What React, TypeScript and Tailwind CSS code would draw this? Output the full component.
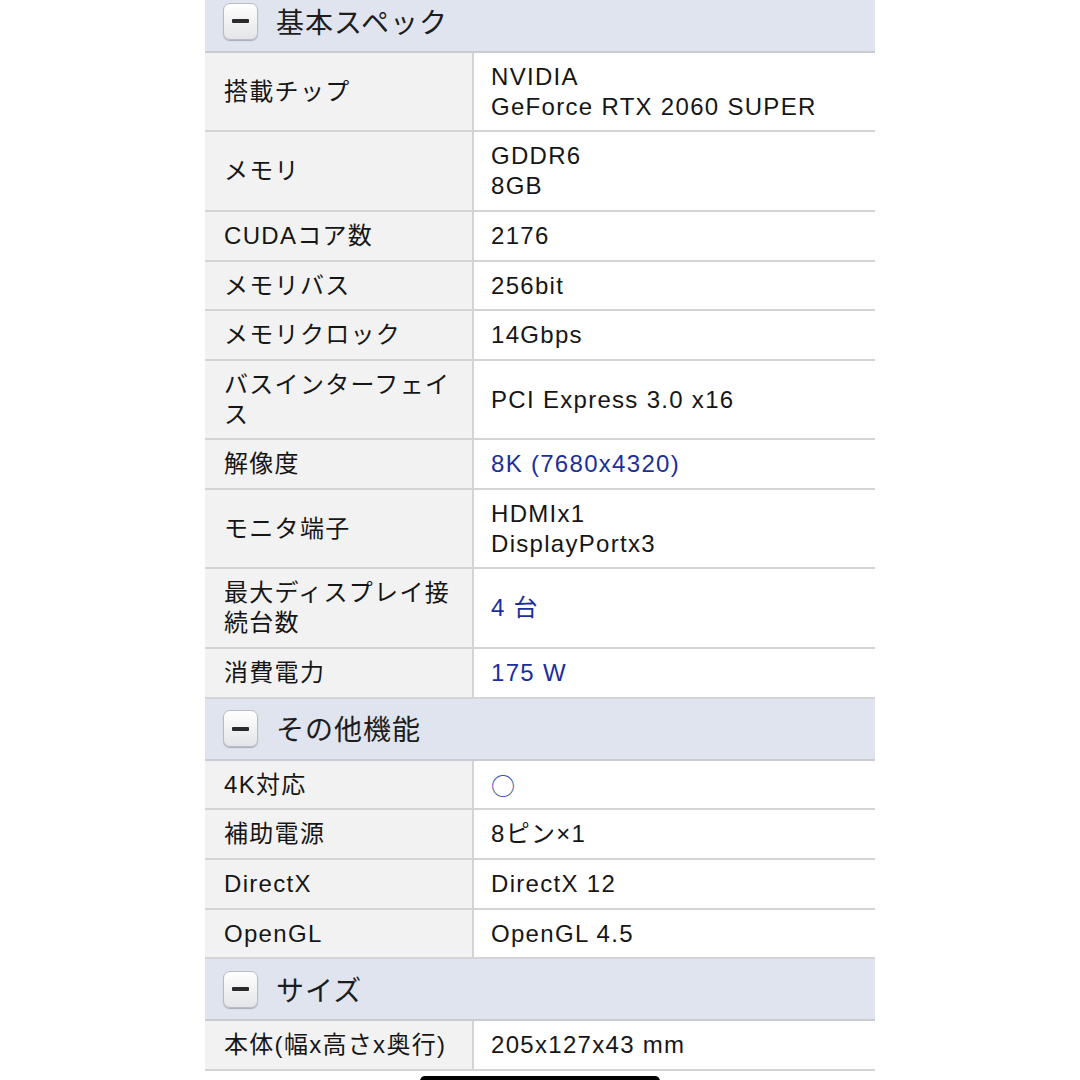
import React from 'react';

type Row = { label: string[]; value: string[]; blue?: boolean; cjk?: boolean };

const sections: { title: string; rows: Row[] }[] = [
    {
        title: '基本スペック',
        rows: [
            { label: ['搭載チップ'], value: ['NVIDIA', 'GeForce RTX 2060 SUPER'] },
            { label: ['メモリ'], value: ['GDDR6', '8GB'] },
            { label: ['CUDAコア数'], value: ['2176'] },
            { label: ['メモリバス'], value: ['256bit'] },
            { label: ['メモリクロック'], value: ['14Gbps'] },
            { label: ['バスインターフェイ', 'ス'], value: ['PCI Express 3.0 x16'] },
            { label: ['解像度'], value: ['8K (7680x4320)'], blue: true },
            { label: ['モニタ端子'], value: ['HDMIx1', 'DisplayPortx3'] },
            { label: ['最大ディスプレイ接', '続台数'], value: ['4 台'], blue: true },
            { label: ['消費電力'], value: ['175 W'], blue: true },
        ],
    },
    {
        title: 'その他機能',
        rows: [
            { label: ['4K対応'], value: ['○'], blue: true, cjk: true },
            { label: ['補助電源'], value: ['8ピン×1'] },
            { label: ['DirectX'], value: ['DirectX 12'] },
            { label: ['OpenGL'], value: ['OpenGL 4.5'] },
        ],
    },
    {
        title: 'サイズ',
        rows: [{ label: ['本体(幅x高さx奥行)'], value: ['205x127x43 mm'] }],
    },
];

const MinusButton = () => (
    <div className="w-[35px] h-[37px] rounded-[7px] border border-[#b9bcc2] bg-gradient-to-b from-white to-[#e4e5e8] shadow-[0_1px_1px_rgba(0,0,0,0.25)] flex items-center justify-center">
        <div className="w-[17px] h-[4px] rounded-[1px] bg-[#2b2b2b]" />
    </div>
);

const App = () => {
    return (
        <div
            className="w-full h-[1080px] bg-white overflow-hidden relative text-[#161616]"
            style={{ fontFamily: '"Liberation Sans", "Noto Sans CJK JP", sans-serif' }}
        >
            <div className="ml-[205px] w-[670px] -mt-[9px]">
                {sections.map(section => (
                    <div key={section.title}>
                        <div className="h-[62px] bg-[#dfe4ef] border-b-2 border-[#c9ccd2] flex items-center pl-[18px] gap-[18px]">
                            <MinusButton />
                            <span className="mt-[5px] text-[28px] leading-none tracking-[1px] text-[#1d1d1d]">{section.title}</span>
                        </div>
                        {section.rows.map((row, i) => (
                            <div key={i} className="flex border-b-2 border-[#d4d4d4] text-[24px] leading-[29.7px] tracking-[1.3px]">
                                <div className="w-[269px] shrink-0 bg-[#f2f2f2] border-r-2 border-[#d4d4d4] pl-[19px] py-[9px] flex flex-col justify-center">
                                    {row.label.map(l => <div key={l}>{l}</div>)}
                                </div>
                                <div className={`flex-1 pl-[17px] py-[9px] flex flex-col justify-center ${row.blue ? 'text-[#1b2f9c]' : ''} ${row.cjk ? "font-['Noto_Sans_CJK_JP'] text-[#3d52b0]" : ''}`}>
                                    {row.value.map(v => <div key={v}>{v}</div>)}
                                </div>
                            </div>
                        ))}
                    </div>
                ))}
            </div>
            <div className="absolute left-[420px] top-[1076px] w-[240px] h-[10px] rounded-t-[5px] bg-black" />
        </div>
    );
};

export default App;
